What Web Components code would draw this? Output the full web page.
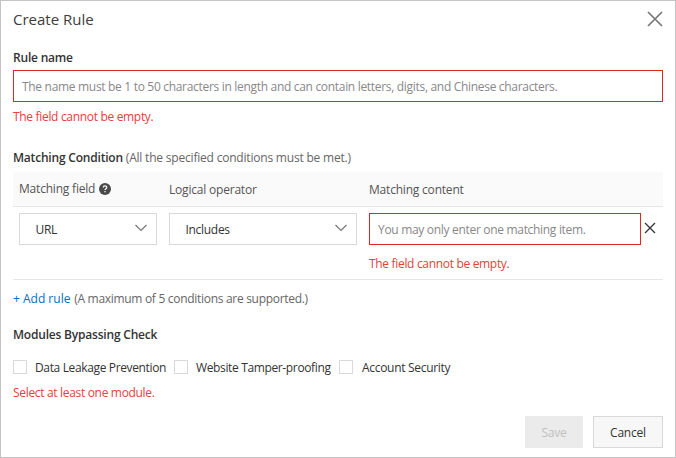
<!DOCTYPE html>
<html>
<head>
<meta charset="utf-8">
<title>Create Rule</title>
<style>
html, body { margin: 0; padding: 0; background: #fff; }
body { font-family: "Open Sans", "Noto Sans", "Liberation Sans", sans-serif; font-size: 12px; color: #333; }
</style>
</head>
<body>
<rule-dialog heading="Create Rule">
  <form-label style="margin-top:12px">Rule name</form-label>
  <text-box invalid style="margin-top:3px;height:32px" placeholder="The name must be 1 to 50 characters in length and can contain letters, digits, and Chinese characters."></text-box>
  <error-text style="margin-top:6px">The field cannot be empty.</error-text>
  <form-label style="margin-top:23px">Matching Condition <span style="font-weight:400;color:#666">(All the specified conditions must be met.)</span></form-label>
  <condition-table style="margin-top:5px"></condition-table>
  <add-rule style="margin-top:10px"></add-rule>
  <form-label style="margin-top:18px">Modules Bypassing Check</form-label>
  <div style="display:flex;margin-top:15px;height:16px;align-items:center">
    <check-item style="width:161px">Data Leakage Prevention</check-item>
    <check-item style="width:165px">Website Tamper-proofing</check-item>
    <check-item class="last">Account Security</check-item>
  </div>
  <error-text style="margin-top:9px">Select at least one module.</error-text>
  <dialog-actions style="margin-top:14px"></dialog-actions>
</rule-dialog>

<script>
const FONT = '"Open Sans", "Noto Sans", "Liberation Sans", sans-serif';

class RuleDialog extends HTMLElement {
    constructor() {
        super();
        this.attachShadow({ mode: 'open' });
        this.shadowRoot.innerHTML = `
            <style>
                :host {
                    display: block;
                    box-sizing: border-box;
                    width: 676px;
                    height: 458px;
                    border: 1px solid #c4c4c4;
                    padding: 0 12px;
                    background: #fff;
                    font-family: ${FONT};
                    overflow: hidden;
                }
                .head {
                    display: flex;
                    justify-content: space-between;
                    align-items: center;
                    height: 36px;
                }
                .title {
                    font-size: 15px;
                    color: #3d3d3d;
                }
                .close {
                    display: block;
                    margin-right: 0;
                }
            </style>
            <div class="head">
                <span class="title">${this.getAttribute('heading')}</span>
                <svg class="close" width="16" height="16" viewBox="0 0 16 16">
                    <path d="M1 1 L15 15 M15 1 L1 15" stroke="#777" stroke-width="1.7" fill="none"/>
                </svg>
            </div>
            <slot></slot>
        `;
    }
}

class FormLabel extends HTMLElement {
    constructor() {
        super();
        this.attachShadow({ mode: 'open' });
        this.shadowRoot.innerHTML = `
            <style>
                :host {
                    display: block;
                    font-size: 12px;
                    line-height: 18px;
                    font-weight: 600;
                    color: #333;
                    white-space: nowrap;
                    letter-spacing: -0.2px;
                }
            </style>
            <slot></slot>
        `;
    }
}

class ErrorText extends HTMLElement {
    constructor() {
        super();
        this.attachShadow({ mode: 'open' });
        this.shadowRoot.innerHTML = `
            <style>
                :host {
                    display: block;
                    font-size: 12px;
                    line-height: 18px;
                    color: #e8403a;
                    white-space: nowrap;
                    letter-spacing: -0.32px;
                }
            </style>
            <slot></slot>
        `;
    }
}

class TextBox extends HTMLElement {
    constructor() {
        super();
        this.attachShadow({ mode: 'open' });
        this.shadowRoot.innerHTML = `
            <style>
                :host {
                    display: block;
                    box-sizing: border-box;
                    height: 32px;
                    border: 1px solid #d9d9d9;
                    background: #fff;
                }
                :host([invalid]) {
                    border-color: #e0291e;
                }
                .ph {
                    display: flex;
                    align-items: center;
                    height: 100%;
                    padding-left: 8px;
                    font-size: 12px;
                    color: #888;
                    white-space: nowrap;
                    letter-spacing: -0.31px;
                }
            </style>
            <div class="ph">${this.getAttribute('placeholder')}</div>
        `;
    }
}

class SelectBox extends HTMLElement {
    constructor() {
        super();
        this.attachShadow({ mode: 'open' });
        this.shadowRoot.innerHTML = `
            <style>
                :host {
                    display: flex;
                    box-sizing: border-box;
                    align-items: center;
                    justify-content: space-between;
                    height: 32px;
                    border: 1px solid #d9d9d9;
                    padding: 0 8px 0 15.5px;
                    font-size: 12px;
                    color: #333;
                    letter-spacing: -0.3px;
                }
                svg { display: block; margin-top: -2px; }
            </style>
            <slot></slot>
            <svg width="14" height="8" viewBox="0 0 14 8">
                <path d="M1.5 1 L7 6.5 L12.5 1" stroke="#777" stroke-width="1.2" fill="none"/>
            </svg>
        `;
    }
}

class ConditionTable extends HTMLElement {
    constructor() {
        super();
        this.attachShadow({ mode: 'open' });
        this.shadowRoot.innerHTML = `
            <style>
                :host {
                    display: block;
                    font-size: 12px;
                    letter-spacing: -0.2px;
                    color: #555;
                    border-bottom: 1px solid #e6e6e6;
                }
                .row {
                    display: grid;
                    grid-template-columns: 138px 188px 272px 22px;
                    column-gap: 12px;
                    padding-left: 6px;
                }
                .header {
                    height: 33px;
                    padding-top: 1px;
                    background: #fafafa;
                    border-bottom: 1px solid #e6e6e6;
                    align-items: center;
                }
                .body {
                    padding-top: 6px;
                    padding-bottom: 6px;
                }
                .help { display: inline-block; vertical-align: -2px; margin-left: 1px; }
                .remove { display: block; margin: 9px 0 0 -9px; }
                .err { grid-column: 3; margin-top: 10px; }
                .name { display: block; margin-top: -3px; }
            </style>
            <div class="row header">
                <div><span class="name">Matching field <svg class="help" width="12" height="12" viewBox="0 0 12 12">
                    <circle cx="6" cy="6" r="6" fill="#4a4a4a"/>
                    <path d="M4.3 4.6 C4.3 2.4 7.8 2.4 7.8 4.5 C7.8 5.8 6 5.7 6 7.1" stroke="#fff" stroke-width="1.2" fill="none"/>
                    <rect x="5.4" y="8" width="1.2" height="1.3" fill="#fff"/>
                </svg></span></div>
                <div>Logical operator</div>
                <div>Matching content</div>
            </div>
            <div class="row body">
                <select-box>URL</select-box>
                <select-box>Includes</select-box>
                <text-box invalid placeholder="You may only enter one matching item."></text-box>
                <svg class="remove" width="12" height="12" viewBox="0 0 12 12">
                    <path d="M1 1 L11 11 M11 1 L1 11" stroke="#333" stroke-width="1.3" fill="none"/>
                </svg>
                <error-text class="err">The field cannot be empty.</error-text>
            </div>
        `;
    }
}

class AddRule extends HTMLElement {
    constructor() {
        super();
        this.attachShadow({ mode: 'open' });
        this.shadowRoot.innerHTML = `
            <style>
                :host {
                    display: block;
                    font-size: 12px;
                    line-height: 18px;
                    color: #666;
                    white-space: nowrap;
                    letter-spacing: -0.3px;
                }
                a { color: #0070cc; text-decoration: none; letter-spacing: 0; margin-right: 1px; }
            </style>
            <a href="#">+ Add rule</a> (A maximum of 5 conditions are supported.)
        `;
    }
}

class CheckItem extends HTMLElement {
    constructor() {
        super();
        this.attachShadow({ mode: 'open' });
        this.shadowRoot.innerHTML = `
            <style>
                :host {
                    display: flex;
                    align-items: center;
                    font-size: 12px;
                    color: #333;
                    white-space: nowrap;
                    letter-spacing: -0.36px;
                }
                :host(.last) {
                    letter-spacing: -0.3px;
                }
                :host(.last) .box {
                    margin-right: 9px;
                }
                .box {
                    box-sizing: border-box;
                    width: 14px;
                    height: 14px;
                    border: 1px solid #d9d9d9;
                    margin-right: 8px;
                    background: #fff;
                }
            </style>
            <span class="box"></span><slot></slot>
        `;
    }
}

class DialogActions extends HTMLElement {
    constructor() {
        super();
        this.attachShadow({ mode: 'open' });
        this.shadowRoot.innerHTML = `
            <style>
                :host {
                    display: flex;
                    justify-content: flex-end;
                    gap: 10px;
                    font-size: 12px;
                    letter-spacing: -0.2px;
                }
                .btn {
                    box-sizing: border-box;
                    height: 32px;
                    display: flex;
                    align-items: center;
                    justify-content: center;
                }
                .save { width: 58px; background: #ebebeb; color: #c0c0c0; }
                .cancel { width: 70px; background: #f7f7f7; border: 1px solid #d9d9d9; color: #333; }
            </style>
            <div class="btn save">Save</div>
            <div class="btn cancel">Cancel</div>
        `;
    }
}

customElements.define('rule-dialog', RuleDialog);
customElements.define('form-label', FormLabel);
customElements.define('error-text', ErrorText);
customElements.define('text-box', TextBox);
customElements.define('select-box', SelectBox);
customElements.define('condition-table', ConditionTable);
customElements.define('add-rule', AddRule);
customElements.define('check-item', CheckItem);
customElements.define('dialog-actions', DialogActions);
</script>
</body>
</html>
